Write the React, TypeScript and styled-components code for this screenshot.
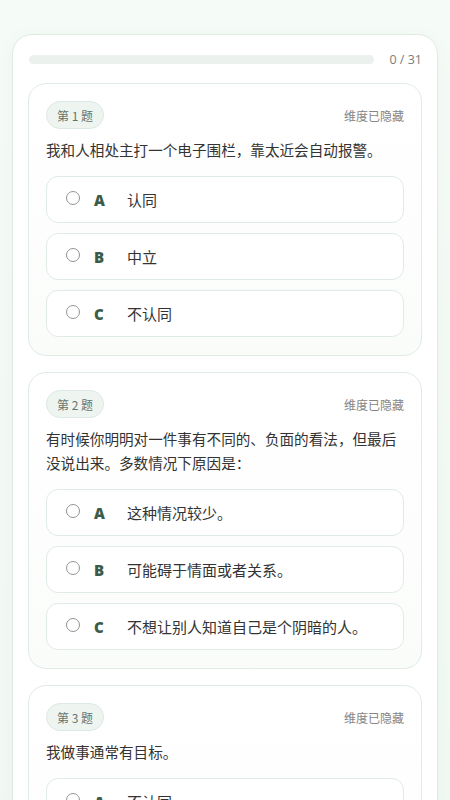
import React from "react";
import styled, { createGlobalStyle } from "styled-components";

const Global = createGlobalStyle`
  html, body { margin: 0; padding: 0; }
  body {
    background: linear-gradient(180deg, #f5fbf7 0%, #f1f8f3 100%);
    font-family: "Open Sans", "Noto Sans CJK SC", sans-serif;
    color: #333;
  }
  * { box-sizing: border-box; }
`;

const Page = styled.div`
  padding: 34px 12px 24px 12px;
  min-height: 800px;
`;

const Shell = styled.div`
  background: #ffffff;
  border: 1px solid #dfeae3;
  border-radius: 20px;
  padding: 15px 15px 16px 15px;
  box-shadow: 0 4px 18px rgba(120, 160, 130, 0.06);
`;

const ProgressRow = styled.div`
  display: flex;
  align-items: center;
  gap: 15px;
  height: 18px;
  margin-bottom: 15px;
`;

const Track = styled.div`
  flex: 1;
  height: 9px;
  border-radius: 5px;
  background: #ebf1ed;
  overflow: hidden;
  margin-left: 1px;
`;

const Fill = styled.div`
  height: 100%;
  background: #6a9a7c;
`;

const Count = styled.span`
  font-family: "Open Sans", sans-serif;
  font-size: 12.5px;
  color: #7c7c7c;
  white-space: nowrap;
`;

const List = styled.div`
  display: flex;
  flex-direction: column;
  gap: 16px;
`;

const QCard = styled.div`
  background: linear-gradient(180deg, #ffffff 0%, #fafcfa 100%);
  border: 1px solid #e0ebe4;
  border-radius: 18px;
  padding: 17px 17px 18px 17px;
`;

const Header = styled.div`
  display: flex;
  align-items: center;
  justify-content: space-between;
  margin-bottom: 9px;
`;

const Badge = styled.span`
  display: inline-flex;
  align-items: center;
  height: 28px;
  padding: 0 10px;
  border-radius: 14px;
  background: #eef5f0;
  border: 1px solid #dde9e2;
  font-size: 12px;
  color: #68736c;
  font-family: "Noto Sans CJK SC", sans-serif;
`;

const Hidden = styled.span`
  font-size: 12px;
  color: #858585;
  font-family: "Noto Sans CJK SC", sans-serif;
`;

const Question = styled.p`
  margin: 0 0 14px 0;
  font-size: 14.6px;
  line-height: 24px;
  color: #333;
  font-family: "Noto Sans CJK SC", sans-serif;
`;

const Options = styled.div`
  display: flex;
  flex-direction: column;
  gap: 10px;
`;

const Option = styled.label`
  display: flex;
  align-items: center;
  height: 47px;
  padding: 0 18px;
  background: #ffffff;
  border: 1px solid #e1ebe5;
  border-radius: 12px;
  cursor: pointer;
`;

const Radio = styled.span`
  width: 14px;
  height: 14px;
  border-radius: 50%;
  border: 1.5px solid #949494;
  flex-shrink: 0;
  margin-top: -3px;
  margin-left: 1px;
  background: #fff;
`;

const Letter = styled.span`
  width: 20px;
  margin-left: 14px;
  margin-right: 13px;
  font-family: "Open Sans", sans-serif;
  font-weight: 800;
  font-size: 15px;
  color: #3c5b48;
`;

const OptText = styled.span`
  font-size: 15px;
  color: #333;
  font-family: "Noto Sans CJK SC", sans-serif;
`;

const questions = [
  {
    text: "我和人相处主打一个电子围栏，靠太近会自动报警。",
    options: ["认同", "中立", "不认同"],
  },
  {
    text: "有时候你明明对一件事有不同的、负面的看法，但最后没说出来。多数情况下原因是：",
    options: ["这种情况较少。", "可能碍于情面或者关系。", "不想让别人知道自己是个阴暗的人。"],
  },
  {
    text: "我做事通常有目标。",
    options: ["不认同", "中立", "认同"],
  },
];

const letters = ["A", "B", "C", "D"];

export default function App() {
  return (
    <>
      <Global />
      <Page>
        <Shell>
          <ProgressRow>
            <Track>
              <Fill style={{ width: "0%" }} />
            </Track>
            <Count>0 / 31</Count>
          </ProgressRow>
          <List>
            {questions.map((q, i) => (
              <QCard key={i}>
                <Header>
                  <Badge>第 {i + 1} 题</Badge>
                  <Hidden>维度已隐藏</Hidden>
                </Header>
                <Question>{q.text}</Question>
                <Options>
                  {q.options.map((o, j) => (
                    <Option key={j}>
                      <Radio />
                      <Letter>{letters[j]}</Letter>
                      <OptText>{o}</OptText>
                    </Option>
                  ))}
                </Options>
              </QCard>
            ))}
          </List>
        </Shell>
      </Page>
    </>
  );
}
